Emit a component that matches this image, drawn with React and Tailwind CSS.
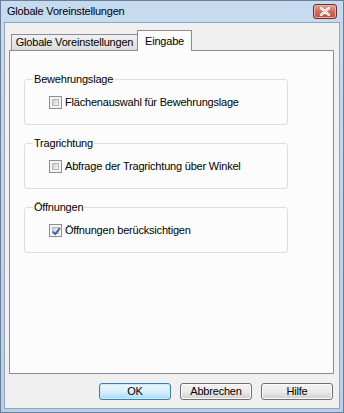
import React from "react";

function CheckBox({ checked }) {
  return (
    <span className="relative block h-[13px] w-[13px] shrink-0 border border-[#8f8f8f] bg-[#f4f4f4] p-[2px]">
      <span className="block h-full w-full border border-[#b5b8bd] bg-gradient-to-br from-[#c9ccd1] to-[#f7f7f7]" />
      {checked && (
        <svg className="absolute left-[1px] top-[1px]" width="11" height="11" viewBox="0 0 11 11">
          <path d="M2 5.5 L4.3 8 L9 2" fill="none" stroke="#3f5a96" strokeWidth="1.8" />
        </svg>
      )}
    </span>
  );
}

function Group({ title, label, checked, last }) {
  return (
    <fieldset className={`w-[264px] rounded-[3px] border border-[#d5dfe5] pb-[15px] pl-[8px] pt-[10px] ${last ? "" : "mb-[12px]"}`}>
      <legend className="px-[1px] leading-[13px]">{title}</legend>
      <div className="flex items-center gap-[3px] pl-[16px] leading-[13px]">
        <CheckBox checked={checked} />
        <span>{label}</span>
      </div>
    </fieldset>
  );
}

function Button({ children, primary }) {
  return (
    <button
      className={`h-[17px] w-[72px] rounded-[3px] border text-center leading-[13px] ${
        primary
          ? "border-[#3c7fb1] bg-gradient-to-b from-[#eaf6fd] via-[#d9f0fc] to-[#a7d9f5] shadow-[inset_0_0_0_1px_#c9eafb]"
          : "border-[#707070] bg-gradient-to-b from-[#f2f2f2] via-[#ebebeb] to-[#cfcfcf] shadow-[inset_0_0_0_1px_#fcfcfc]"
      }`}
    >
      {children}
    </button>
  );
}

export default function App() {
  return (
    <div className="flex h-[413px] w-[344px] flex-col border border-[#6b7f99] bg-gradient-to-b from-[#c6daf0] to-[#b9cfe8] font-['Liberation_Sans',Arial,sans-serif] text-[11px] tracking-[-0.2px] text-black">
      <div className="flex h-[21px] shrink-0 items-center justify-between pl-[6px] pr-[6px]">
        <span className="leading-[13px]">Globale Voreinstellungen</span>
        <span className="flex h-[15px] w-[24px] items-center justify-center rounded-[3px] border border-[#6d2c2c] bg-gradient-to-b from-[#e3a393] via-[#cf6f5c] to-[#c24a34] shadow-[inset_0_0_0_1px_#e8b3a6]">
          <svg width="12" height="9" viewBox="0 0 12 9">
            <path d="M2 1 L10 8 M10 1 L2 8" stroke="#ffffff" strokeWidth="2.4" strokeLinecap="round" />
            <path d="M2 1 L10 8 M10 1 L2 8" stroke="#6b2a22" strokeWidth="0.6" strokeLinecap="round" opacity="0.4" />
          </svg>
        </span>
      </div>
      <div className="mx-[3px] mb-[3px] flex flex-1 flex-col border border-[#8ea6c3] bg-[#f0f0f0] pl-[4px] pr-[6px] pt-[6px]">
        <div className="flex h-[21px] items-end pl-[2px]">
          <div className="flex h-[16px] w-[127px] items-center justify-center border border-b-0 border-[#898c95] bg-gradient-to-b from-[#f2f2f2] to-[#dcdcdc]">
            Globale Voreinstellungen
          </div>
          <div className="relative z-10 -mb-px -ml-px flex h-[21px] w-[55px] items-start justify-center border border-b-0 border-[#898c95] bg-[#fcfcfc] pt-[2px]">
            Eingabe
          </div>
        </div>
        <div className="flex h-[324px] w-[325px] flex-col border border-[#898c95] bg-[#fcfcfc] pl-[14px] pt-[22px]">
          <Group title="Bewehrungslage" label="Flächenauswahl für Bewehrungslage" />
          <Group title="Tragrichtung" label="Abfrage der Tragrichtung über Winkel" />
          <Group title="Öffnungen" label="Öffnungen berücksichtigen" checked last />
        </div>
        <div className="mt-[9px] flex justify-end gap-[9px]">
          <Button primary>OK</Button>
          <Button>Abbrechen</Button>
          <Button>Hilfe</Button>
        </div>
      </div>
    </div>
  );
}
